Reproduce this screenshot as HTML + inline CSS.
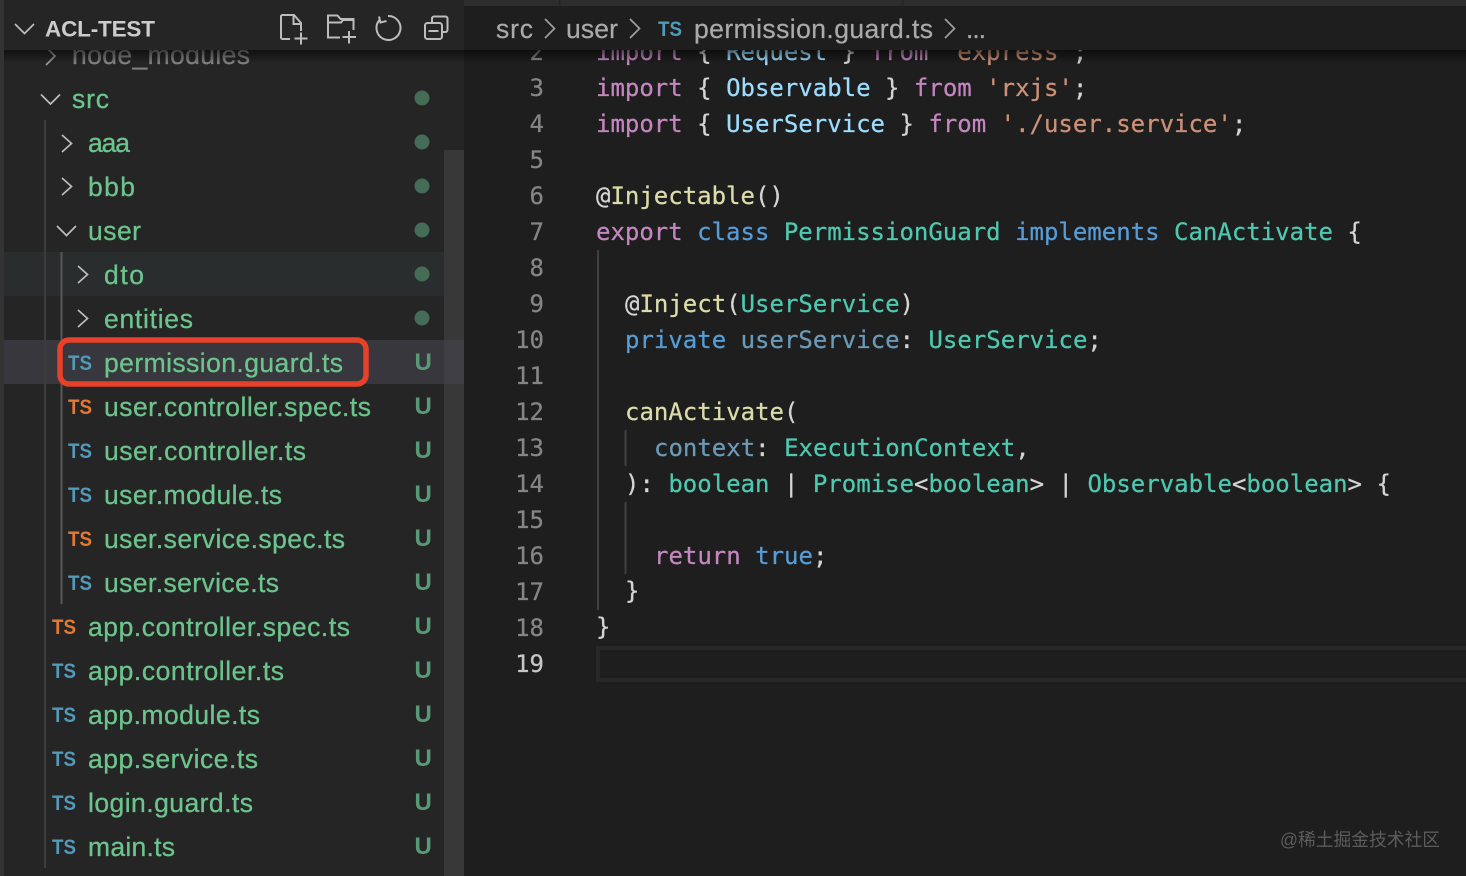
<!DOCTYPE html>
<html><head><meta charset="utf-8"><title>permission.guard.ts</title>
<style>
html,body{margin:0;padding:0;background:#1e1e1e;overflow:hidden}
svg{display:block}
.s{font:26.5px "Liberation Sans",sans-serif;fill:#6cc48c;stroke:#6cc48c;stroke-width:.3}
.t{font:bold 21.5px "Liberation Sans",sans-serif}
.u{font:bold 24px "Liberation Sans",sans-serif;fill:#579a75}
.b{fill:#519aba}.o{fill:#e37933}
.c{font:24px "DejaVu Sans Mono","Liberation Mono",monospace;white-space:pre;fill:#d4d4d4;stroke:#d4d4d4;stroke-width:.25}
.n{font:24px "DejaVu Sans Mono","Liberation Mono",monospace;fill:#858585;stroke:#858585;stroke-width:.25;text-anchor:end}
.k{fill:#c586c0;stroke:#c586c0}.v{fill:#9cdcfe;stroke:#9cdcfe}.str{fill:#ce9178;stroke:#ce9178}.f{fill:#dcdcaa;stroke:#dcdcaa}.g{fill:#4ec9b0;stroke:#4ec9b0}.m{fill:#569cd6;stroke:#569cd6}.d{fill:#6b9ab8;stroke:#6b9ab8}
.bc{font:26.5px "Liberation Sans",sans-serif;fill:#a9a9a9;stroke:#a9a9a9;stroke-width:.25}
.ch{fill:none;stroke:#bdbdbd;stroke-width:1.7}
.ic{fill:none;stroke:#bcbcbc;stroke-width:2}
</style></head><body>
<svg width="1466" height="876" viewBox="0 0 1466 876" xmlns="http://www.w3.org/2000/svg">
<defs>
<linearGradient id="sh" x1="0" y1="0" x2="0" y2="1"><stop offset="0" stop-color="#000" stop-opacity=".55"/><stop offset="1" stop-color="#000" stop-opacity="0"/></linearGradient>
</defs>
<rect width="1466" height="876" fill="#1e1e1e"/>
<!-- sidebar -->
<rect x="0" y="0" width="464" height="876" fill="#252526"/>
<rect x="0" y="0" width="4" height="876" fill="#333334"/>
<rect x="4" y="252" width="460" height="44" fill="#2a2d2e"/>
<rect x="4" y="340" width="460" height="44" fill="#37373d"/>
<rect x="444" y="150" width="20" height="726" fill="#383838"/>
<rect x="444" y="340" width="20" height="44" fill="#3f3f44"/>
<rect x="44" y="120" width="2" height="748" fill="#3c3c3c"/>
<rect x="60.5" y="252" width="2" height="352" fill="#585858"/>

<text class="s" x="72" y="64" textLength="178" lengthAdjust="spacing" style="fill:#808080;stroke:#808080">node_modules</text>
<path class="ch" d="M46 47l9 9-9 9" style="stroke:#9a9a9a"/>

<path class="ch" d="M41 94.500l9.500 9.500 9.500-9.500"/>
<text class="s" x="72" y="108" textLength="37" lengthAdjust="spacing">src</text>
<path class="ch" d="M62 135l9.500 8.500-9.500 8.500"/>
<text class="s" x="88" y="152" textLength="42" lengthAdjust="spacing">aaa</text>
<path class="ch" d="M62 178l9.500 8.500-9.500 8.500"/>
<text class="s" x="88" y="196" textLength="47" lengthAdjust="spacing">bbb</text>
<path class="ch" d="M57 226l9.500 9.500 9.500-9.500"/>
<text class="s" x="88" y="240" textLength="53" lengthAdjust="spacing">user</text>
<path class="ch" d="M78 266l9.500 8.500-9.500 8.500"/>
<text class="s" x="104" y="284" textLength="40" lengthAdjust="spacing">dto</text>
<path class="ch" d="M78 310l9.500 8.500-9.500 8.500"/>
<text class="s" x="104" y="328" textLength="89" lengthAdjust="spacing">entities</text>

<g fill="#446c57">
<circle cx="422" cy="98" r="7.500"/><circle cx="422" cy="142" r="7.500"/><circle cx="422" cy="186" r="7.500"/><circle cx="422" cy="230" r="7.500"/><circle cx="422" cy="274" r="7.500"/><circle cx="422" cy="318" r="7.500"/>
</g>

<text class="t b" x="68" y="370" textLength="24" lengthAdjust="spacingAndGlyphs">TS</text>
<text class="s" x="104" y="372" textLength="239" lengthAdjust="spacing">permission.guard.ts</text>
<text class="t o" x="68" y="414" textLength="24" lengthAdjust="spacingAndGlyphs">TS</text>
<text class="s" x="104" y="416" textLength="267" lengthAdjust="spacing">user.controller.spec.ts</text>
<text class="t b" x="68" y="458" textLength="24" lengthAdjust="spacingAndGlyphs">TS</text>
<text class="s" x="104" y="460" textLength="202" lengthAdjust="spacing">user.controller.ts</text>
<text class="t b" x="68" y="502" textLength="24" lengthAdjust="spacingAndGlyphs">TS</text>
<text class="s" x="104" y="504" textLength="178" lengthAdjust="spacing">user.module.ts</text>
<text class="t o" x="68" y="546" textLength="24" lengthAdjust="spacingAndGlyphs">TS</text>
<text class="s" x="104" y="548" textLength="241" lengthAdjust="spacing">user.service.spec.ts</text>
<text class="t b" x="68" y="590" textLength="24" lengthAdjust="spacingAndGlyphs">TS</text>
<text class="s" x="104" y="592" textLength="175" lengthAdjust="spacing">user.service.ts</text>
<text class="t o" x="52" y="634" textLength="24" lengthAdjust="spacingAndGlyphs">TS</text>
<text class="s" x="88" y="636" textLength="262" lengthAdjust="spacing">app.controller.spec.ts</text>
<text class="t b" x="52" y="678" textLength="24" lengthAdjust="spacingAndGlyphs">TS</text>
<text class="s" x="88" y="680" textLength="196" lengthAdjust="spacing">app.controller.ts</text>
<text class="t b" x="52" y="722" textLength="24" lengthAdjust="spacingAndGlyphs">TS</text>
<text class="s" x="88" y="724" textLength="172" lengthAdjust="spacing">app.module.ts</text>
<text class="t b" x="52" y="766" textLength="24" lengthAdjust="spacingAndGlyphs">TS</text>
<text class="s" x="88" y="768" textLength="170" lengthAdjust="spacing">app.service.ts</text>
<text class="t b" x="52" y="810" textLength="24" lengthAdjust="spacingAndGlyphs">TS</text>
<text class="s" x="88" y="812" textLength="165" lengthAdjust="spacing">login.guard.ts</text>
<text class="t b" x="52" y="854" textLength="24" lengthAdjust="spacingAndGlyphs">TS</text>
<text class="s" x="88" y="856" textLength="87" lengthAdjust="spacing">main.ts</text>

<text class="u" x="414.500" y="370">U</text><text class="u" x="414.500" y="414">U</text><text class="u" x="414.500" y="458">U</text><text class="u" x="414.500" y="502">U</text><text class="u" x="414.500" y="546">U</text><text class="u" x="414.500" y="590">U</text><text class="u" x="414.500" y="634">U</text><text class="u" x="414.500" y="678">U</text><text class="u" x="414.500" y="722">U</text><text class="u" x="414.500" y="766">U</text><text class="u" x="414.500" y="810">U</text><text class="u" x="414.500" y="854">U</text>

<rect x="60" y="340" width="306" height="44" rx="9" fill="none" stroke="#e8412a" stroke-width="5.500"/>

<!-- editor -->
<rect x="597" y="250" width="2" height="360" fill="#404040"/>
<rect x="624.500" y="430" width="2" height="36" fill="#404040"/>
<rect x="624.500" y="502" width="2" height="72" fill="#404040"/>
<rect x="598" y="648" width="880" height="32" fill="none" stroke="#282828" stroke-width="4"/>

<text class="n" x="544" y="60">2</text>
<text class="n" x="544" y="96">3</text>
<text class="n" x="544" y="132">4</text>
<text class="n" x="544" y="168">5</text>
<text class="n" x="544" y="204">6</text>
<text class="n" x="544" y="240">7</text>
<text class="n" x="544" y="276">8</text>
<text class="n" x="544" y="312">9</text>
<text class="n" x="544" y="348">10</text>
<text class="n" x="544" y="384">11</text>
<text class="n" x="544" y="420">12</text>
<text class="n" x="544" y="456">13</text>
<text class="n" x="544" y="492">14</text>
<text class="n" x="544" y="528">15</text>
<text class="n" x="544" y="564">16</text>
<text class="n" x="544" y="600">17</text>
<text class="n" x="544" y="636">18</text>
<text class="n" x="544" y="672" style="fill:#c6c6c6;stroke:#c6c6c6">19</text>

<g xml:space="preserve">
<text class="c" x="596" y="60"><tspan class="k">import</tspan> { <tspan class="v">Request</tspan> } <tspan class="k">from</tspan> <tspan class="str">'express'</tspan>;</text>
<text class="c" x="596" y="96"><tspan class="k">import</tspan> { <tspan class="v">Observable</tspan> } <tspan class="k">from</tspan> <tspan class="str">'rxjs'</tspan>;</text>
<text class="c" x="596" y="132"><tspan class="k">import</tspan> { <tspan class="v">UserService</tspan> } <tspan class="k">from</tspan> <tspan class="str">'./user.service'</tspan>;</text>
<text class="c" x="596" y="204">@<tspan class="f">Injectable</tspan>()</text>
<text class="c" x="596" y="240"><tspan class="k">export</tspan> <tspan class="m">class</tspan> <tspan class="g">PermissionGuard</tspan> <tspan class="m">implements</tspan> <tspan class="g">CanActivate</tspan> {</text>
<text class="c" x="625" y="312">@<tspan class="f">Inject</tspan>(<tspan class="g">UserService</tspan>)</text>
<text class="c" x="625" y="348"><tspan class="m">private</tspan> <tspan class="d">userService</tspan>: <tspan class="g">UserService</tspan>;</text>
<text class="c" x="625" y="420"><tspan class="f">canActivate</tspan>(</text>
<text class="c" x="654" y="456"><tspan class="d">context</tspan>: <tspan class="g">ExecutionContext</tspan>,</text>
<text class="c" x="625" y="492">): <tspan class="g">boolean</tspan> | <tspan class="g">Promise</tspan>&lt;<tspan class="g">boolean</tspan>&gt; | <tspan class="g">Observable</tspan>&lt;<tspan class="g">boolean</tspan>&gt; {</text>
<text class="c" x="654" y="564"><tspan class="k">return</tspan> <tspan class="m">true</tspan>;</text>
<text class="c" x="625" y="599">}</text>
<text class="c" x="596" y="635">}</text>
</g>

<text x="1280" y="846" textLength="160" lengthAdjust="spacingAndGlyphs" style="font:18px 'Liberation Sans','Noto Sans CJK SC',sans-serif;fill:#5c5c5c">@稀土掘金技术社区</text>

<!-- top shadow + headers -->
<rect x="4" y="50" width="1462" height="13" fill="url(#sh)"/>
<rect x="0" y="0" width="464" height="50" fill="#252526"/>
<rect x="0" y="0" width="4" height="50" fill="#333334"/>
<rect x="464" y="0" width="1002" height="50" fill="#1e1e1e"/>
<rect x="464" y="0" width="1002" height="6" fill="#2d2d2d"/>
<rect x="559" y="0" width="1.500" height="6" fill="#252526"/>
<rect x="902" y="0" width="1.500" height="6" fill="#252526"/>

<path class="ch" d="M15 24l9.500 9.500 9.500-9.500"/>
<text x="45" y="36.500" textLength="110" lengthAdjust="spacing" style="font:bold 22.500px 'Liberation Sans',sans-serif;fill:#cccccc">ACL-TEST</text>

<path class="ic" d="M290 39H282.500a1.500 1.500 0 0 1-1.500-1.500V16.500a1.500 1.500 0 0 1 1.500-1.500H294l7 8v8M293.500 15v9h7.500M301 32.500v12M294.500 38.500h13"/>
<path class="ic" d="M340 37.500H328V15.500h9.500l3 3.500H353.500v11M328 22.500h13l2-2.500h10.500M349 31v12.500M342.500 37h13.500"/>
<path class="ic" d="M380 19.500A12 12 0 1 0 388 16"/>
<path class="ic" d="M379 16.500l1.500 6 6-1.500"/>
<path class="ic" d="M432 23v-4.500a2 2 0 0 1 2-2h11.500a2 2 0 0 1 2 2v11.500a2 2 0 0 1-2 2h-4"/>
<rect class="ic" x="425" y="23" width="17" height="16" rx="2.500"/>
<path class="ic" d="M428.500 31h10"/>

<text class="bc" x="496" y="38" textLength="37" lengthAdjust="spacing">src</text>
<path class="ch" d="M545 19l9.500 9.500-9.500 9.500" style="stroke:#a0a0a0"/>
<text class="bc" x="566" y="38" textLength="52" lengthAdjust="spacing">user</text>
<path class="ch" d="M630 19l9.500 9.500-9.500 9.500" style="stroke:#a0a0a0"/>
<text class="t b" x="658" y="36" textLength="24" lengthAdjust="spacingAndGlyphs">TS</text>
<text class="bc" x="694" y="38" textLength="239" lengthAdjust="spacing">permission.guard.ts</text>
<path class="ch" d="M945 19l9.500 9.500-9.500 9.500" style="stroke:#a0a0a0"/>
<text class="bc" x="966" y="38" textLength="20" lengthAdjust="spacing">...</text>
</svg>
</body></html>
